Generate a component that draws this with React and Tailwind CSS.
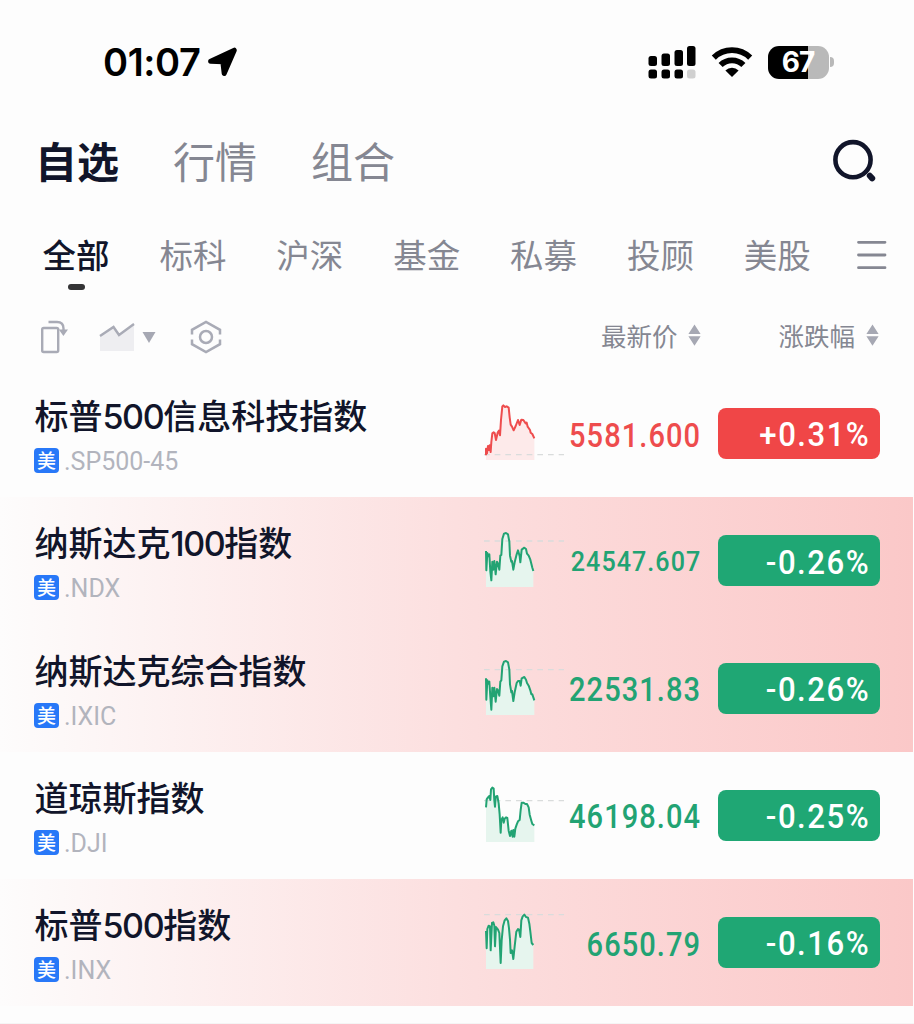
import React, { useState } from 'react';

const MAIN_TABS = ['自选', '行情', '组合'];
const GROUPS = ['全部', '标科', '沪深', '基金', '私募', '投顾', '美股'];

// line points live in a 240 x 180 box, base is the previous close
const STOCKS = [
  {
    name: '标普500信息科技指数', code: '.SP500-45', price: '5581.600', change: '+0.31%', up: true, base: 164,
    line: '6,166 6,146 9,160 12,138 15,150 17,136 20,156 22,126 25,100 29,97 32,99 36,120 41,98 45,92 48,106 51,60 55,19 58,16 63,21 68,19 74,23 77,52 80,74 84,80 89,91 95,78 102,60 107,75 112,59 118,60 125,70 128,68 131,80 138,90 140,98 145,102 151,115',
  },
  {
    name: '纳斯达克100指数', code: '.NDX', price: '24547.607', change: '-0.26%', up: false, base: 42,
    line: '6,72 7,130 10,78 13,88 16,82 19,134 22,160 25,104 28,128 31,102 35,142 39,104 42,110 46,128 49,86 52,84 55,36 60,20 66,18 72,22 76,44 78,86 82,104 84,102 88,128 92,106 98,82 102,70 107,88 109,106 113,68 121,62 126,66 129,80 134,86 139,98 145,122 148,132',
  },
  {
    name: '纳斯达克综合指数', code: '.IXIC', price: '22531.83', change: '-0.26%', up: false, base: 44,
    line: '6,70 7,134 10,76 13,86 16,80 19,126 22,164 25,98 28,124 31,98 35,140 39,102 42,106 46,122 49,80 52,76 55,34 60,20 66,18 72,22 76,44 78,88 82,112 84,108 88,138 92,112 98,84 102,78 107,78 110,92 113,70 121,66 126,74 129,84 134,92 139,106 142,118 145,118 151,136',
  },
  {
    name: '道琼斯指数', code: '.DJI', price: '46198.04', change: '-0.25%', up: false, base: 56,
    line: '6,76 8,52 12,46 16,42 19,54 21,22 25,17 29,20 31,56 33,74 35,44 40,42 44,64 47,98 50,152 52,114 56,106 59,122 62,110 66,106 70,108 74,146 78,162 82,146 86,164 88,144 91,164 94,140 98,128 102,118 107,114 110,84 113,62 118,62 124,66 129,66 134,76 137,98 142,116 145,126 151,130',
  },
  {
    name: '标普500指数', code: '.INX', price: '6650.79', change: '-0.16%', up: false, base: 17,
    line: '6,66 8,118 10,60 14,50 18,52 20,124 24,42 28,40 31,50 33,112 36,54 42,62 46,72 50,162 53,94 57,52 62,34 67,28 72,36 75,58 78,92 80,132 84,124 88,150 92,112 97,68 102,60 105,62 109,84 112,34 116,22 121,17 126,24 132,26 136,44 139,68 143,102 148,108',
  },
];

function LocationArrow() {
  return (
    <svg width="32" height="32" viewBox="0 0 32 32" className="ml-[6px]">
      <path d="M28.3 4.2 18.2 27.4 16.8 15.8 4.6 15.2Z" fill="#000" stroke="#000" strokeWidth="5" strokeLinejoin="round" />
    </svg>
  );
}

function Signal() {
  return (
    <svg width="48" height="34" viewBox="0 0 48 34">
      <rect x="0.5" y="11" width="8.5" height="10" rx="2.5" />
      <rect x="13.5" y="8.5" width="8.5" height="12.5" rx="2.5" />
      <rect x="26.5" y="5" width="8.5" height="16" rx="2.5" />
      <rect x="39" y="1" width="8.5" height="20" rx="2.5" />
      <rect x="0.5" y="24.5" width="8.5" height="9" rx="2.5" />
      <rect x="13.5" y="24.5" width="8.5" height="9" rx="2.5" />
      <rect x="26.5" y="24.5" width="8.5" height="9" rx="2.5" />
      <rect x="39" y="24.5" width="8.5" height="9" rx="2.5" fill="#d0d0d0" />
    </svg>
  );
}

function Wifi() {
  return (
    <svg width="42" height="32" viewBox="0 0 42 32" fill="none" stroke="#000" strokeWidth="5.8">
      <path d="M2.8 11.6a26 26 0 0 1 36.4 0" />
      <path d="M9.6 19a16.2 16.2 0 0 1 22.8 0" />
      <path d="M21 31 14.4 24.4a9.4 9.4 0 0 1 13.2 0Z" fill="#000" stroke="none" />
    </svg>
  );
}

function StatusBar() {
  return (
    <div className="flex h-[124px] items-center justify-between pl-[103px] pr-[80px]">
      <div className="flex items-center">
        <span className="font-['Inter'] text-[38px] font-semibold leading-none tracking-[-0.4px] text-black">01:07</span>
        <LocationArrow />
      </div>
      <div className="flex items-center">
        <Signal />
        <div className="ml-[15px]"><Wifi /></div>
        <div className="ml-[15px] flex h-[33px] w-[61px] items-center justify-center rounded-[11px] bg-linear-to-r from-black from-[66%] to-[#b9b9b9] to-[66%]">
          <span className="font-['Inter'] text-[28px] font-bold leading-none tracking-[-1px] text-white">67</span>
        </div>
        <div className="ml-[1.5px] h-[10px] w-[4px] rounded-r-full bg-[#b9b9b9]" />
      </div>
    </div>
  );
}

function SortArrows() {
  return (
    <svg width="13" height="22" viewBox="0 0 13 22" fill="#a6a8b3">
      <path d="M6.5 0.5 12.6 10H0.4ZM6.5 21.8 12.6 12.3H0.4Z" />
    </svg>
  );
}

function Toolbar() {
  return (
    <div className="flex h-[84px] items-center pl-[40px] pr-[35px]">
      <div className="flex items-center pt-[4px]">
        <svg width="30" height="34" viewBox="0 0 30 34" fill="none" stroke="#a9abb6" strokeWidth="2.4">
          <rect x="2.2" y="8" width="16" height="24" rx="1.5" />
          <path d="M8.5 2H17q6.5 0 6.5 6.5V10" />
          <path d="M18.8 9.5h9.2l-4.6 6.6Z" fill="#a9abb6" stroke="none" />
        </svg>
        <svg width="36" height="30" viewBox="0 0 36 30" className="ml-[29px]" fill="none">
          <path d="M1 14 15 5l5 8L35 1v28H1Z" fill="#eeeef1" />
          <path d="M1 14 14.5 5l5.5 8L35 2" stroke="#a9abb6" strokeWidth="2.4" />
        </svg>
        <svg width="14" height="13" viewBox="0 0 14 13" className="ml-[7px]">
          <path d="M0.5 1h13L7 12Z" fill="#a6a8b3" />
        </svg>
        <svg width="32" height="34" viewBox="0 0 32 34" className="ml-[34px]" fill="none" stroke="#a9abb6" strokeWidth="2.5">
          <path d="M2 14.5V9.8L16 2l14 7.8v4.7M2 19.5v4.7L16 32l14-7.8v-4.7" />
          <circle cx="16" cy="17" r="6" />
        </svg>
      </div>
      <div className="ml-auto flex items-center gap-[11px]">
        <span className="text-[25.5px] leading-none text-[#858792]">最新价</span>
        <SortArrows />
      </div>
      <div className="ml-[77px] flex items-center gap-[11px]">
        <span className="text-[25.5px] leading-none text-[#858792]">涨跌幅</span>
        <SortArrows />
      </div>
    </div>
  );
}

function Sparkline({ line, base, up }) {
  const color = up ? '#ee4c4d' : '#22a373';
  const last = line.split(' ').pop().split(',')[0];

  return (
    <svg width="80" height="60" viewBox="0 0 240 180">
      <polygon points={`6,180 ${line} ${last},180`} fill={up ? '#fdeaea' : '#e6f5ee'} />
      <line x1="0" x2="240" y1={base} y2={base} stroke="#d9dcdc" strokeWidth="4" strokeDasharray="17 15" />
      <polyline points={line} fill="none" stroke={color} strokeWidth="6" strokeLinejoin="round" />
    </svg>
  );
}

function StockRow({ stock }) {
  const { name, code, price, change, up, line, base } = stock;
  const priceSize = price.length > 8 ? 'text-[28.5px] tracking-[1.2px]' : 'text-[33px] tracking-[1.2px]';

  return (
    <div className="flex h-[127.25px] w-[914px] px-[34px]">
      <div className="w-[450px] shrink-0 pt-[25px]">
        <div className="h-[40px] whitespace-nowrap pl-[0.5px] text-[34px] font-medium leading-[40px] text-[#11152a]">
          {name.split(/(\d+)/).map((part, i) => (
            <span key={i} className={i % 2 ? "font-['Inter'] tracking-[-1.4px]" : ''}>{part}</span>
          ))}
        </div>
        <div className="mt-[13px] flex h-[25px] items-center">
          <span className="flex size-[25px] items-center justify-center rounded-[4px] bg-[#2878f8] pb-[2px] text-[19px] font-medium leading-none text-white">美</span>
          <span className="ml-[5px] pt-[2px] font-['Roboto'] text-[25px] leading-none text-[#b2b4bd]">{code}</span>
        </div>
      </div>
      <div className="shrink-0 pt-[30px]">
        <Sparkline line={line} base={base} up={up} />
      </div>
      <div className="mt-[38px] flex h-[51px] min-w-0 flex-1 items-center justify-end pt-[3px]">
        <span className={`-mr-[1px] origin-right scale-x-[0.88] font-['Roboto'] font-medium leading-none ${priceSize} ${up ? 'text-[#ee4c4d]' : 'text-[#22a373]'}`}>{price}</span>
      </div>
      <div className={`ml-[18px] mt-[38px] flex h-[51px] w-[162px] shrink-0 items-center justify-end rounded-[8px] pr-[10px] pt-[3px] ${up ? 'bg-[#f04647]' : 'bg-[#1fa774]'}`}>
        <span className="origin-right scale-x-[0.93] font-['Roboto'] text-[33.5px] font-medium leading-none tracking-[1.6px] text-white">{change}</span>
      </div>
    </div>
  );
}

export default function App() {
  const [tab, setTab] = useState('自选');
  const [group, setGroup] = useState('全部');

  return (
    <div className="h-[1024px] w-[914px] overflow-hidden border-b border-[#f5f5f5] bg-[#fdfdfd] font-['Noto_Sans_CJK_SC',sans-serif]">
      <StatusBar />

      {/* Main tabs */}
      <div className="flex h-[76px] items-center pl-[35px] pr-[36px]">
        <div className="flex gap-[54px] pb-[4px]">
          {MAIN_TABS.map(t => (
            <button
              key={t}
              onClick={() => setTab(t)}
              className={`text-[42px] leading-none ${t === tab ? 'font-bold text-[#11152a]' : 'text-[#858792]'}`}
            >
              {t}
            </button>
          ))}
        </div>
        <svg width="46" height="46" viewBox="0 0 46 46" className="ml-auto" fill="none" stroke="#11152a">
          <circle cx="21" cy="20.7" r="17.6" strokeWidth="4.6" />
          <path d="M37.8 36.8l2.4 2.6" strokeWidth="6" strokeLinecap="round" />
        </svg>
      </div>

      {/* Group tabs */}
      <div className="flex h-[94px] items-start pl-[42.5px] pr-[27px] pt-[36px]">
        <div className="flex gap-[49.9px]">
          {GROUPS.map(g => (
            <button
              key={g}
              onClick={() => setGroup(g)}
              className={`flex flex-col items-center text-[33.5px] leading-[36px] ${g === group ? 'font-medium text-[#11152a]' : 'text-[#858792]'}`}
            >
              {g}
              {g === group && <span className="mt-[12px] h-[6px] w-[17px] rounded-[3px] bg-[#343436]" />}
            </button>
          ))}
        </div>
        <svg width="30" height="36" viewBox="0 0 30 36" className="ml-auto mt-[2px]" fill="none" stroke="#858792" strokeWidth="2.8" strokeLinecap="round">
          <path d="M1.5 4.3h26.5M1.5 17h26.5M1.5 29.7h26.5" />
        </svg>
      </div>

      <div className="-mt-[1px]"><Toolbar /></div>

      {/* Stock list */}
      <div className="-mt-[7px]">
        <StockRow stock={STOCKS[0]} />
        <div className="mr-[1px] bg-linear-to-r from-[#fdfcfc] via-[#fcdfdf] to-[#fbc8c8]">
          <StockRow stock={STOCKS[1]} />
          <StockRow stock={STOCKS[2]} />
        </div>
        <StockRow stock={STOCKS[3]} />
        <div className="mr-[1px] bg-linear-to-r from-[#fdfcfc] via-[#fcdfdf] to-[#fbc8c8]">
          <StockRow stock={STOCKS[4]} />
        </div>
      </div>
    </div>
  );
}
